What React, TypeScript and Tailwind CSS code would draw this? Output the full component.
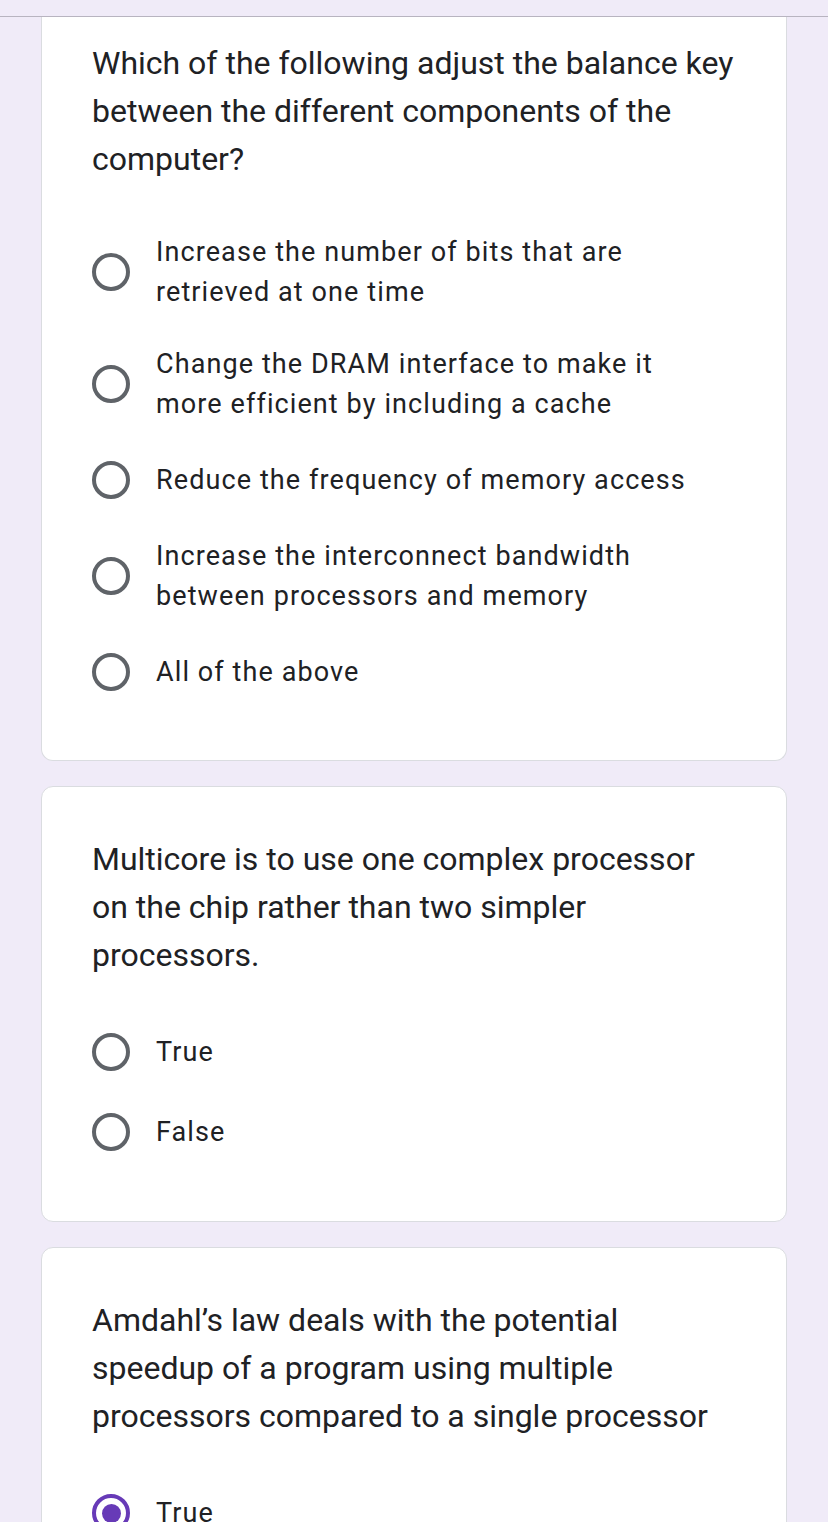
const font = { fontFamily: "Roboto, 'Noto Sans', sans-serif" };

type Question = {
  title: string;
  options: string[];
  selected?: number;
};

const questions: Question[] = [
  {
    title: "Which of the following adjust the balance key between the different components of the computer?",
    options: [
      "Increase the number of bits that are retrieved at one time",
      "Change the DRAM interface to make it more efficient by including a cache",
      "Reduce the frequency of memory access",
      "Increase the interconnect bandwidth between processors and memory",
      "All of the above",
    ],
  },
  {
    title: "Multicore is to use one complex processor on the chip rather than two simpler processors.",
    options: ["True", "False"],
  },
  {
    title: "Amdahl\u2019s law deals with the potential speedup of a program using multiple processors compared to a single processor",
    options: ["True", "False"],
    selected: 0,
  },
];

function Radio({ checked }: { checked: boolean }) {
  return (
    <div className="flex h-12 w-[38px] shrink-0 items-center justify-center">
      {checked ? (
        <div className="flex h-[38px] w-[38px] items-center justify-center rounded-full border-[4px] border-[#673ab7]">
          <div className="h-[19px] w-[19px] rounded-full bg-[#673ab7]" />
        </div>
      ) : (
        <div className="h-[38px] w-[38px] rounded-full border-[4px] border-[#5f6368]" />
      )}
    </div>
  );
}

function QuestionCard({ q, first }: { q: Question; first?: boolean }) {
  return (
    <div
      className={`mx-[41px] border border-[#dadce0] bg-white pl-[50px] pr-[50px] ${
        first ? "border-t-0 rounded-b-[12px] pt-[22px] pb-[48px]" : "rounded-[12px] pt-[48px] pb-[49px]"
      }`}
    >
      <div className="text-[32px] leading-[48px] text-[#202124]">{q.title}</div>
      <div className="mt-[33px] flex flex-col">
        {q.options.map((opt, i) => (
          <div key={opt} className="flex items-center gap-[26px] py-4">
            <Radio checked={q.selected === i} />
            <div className="pr-[31px] text-[27px] leading-[40px] tracking-[1.1px] text-[#202124]">
              {opt}
            </div>
          </div>
        ))}
      </div>
    </div>
  );
}

export default function App() {
  return (
    <div className="min-h-screen bg-[#f0ebf8] pt-4" style={font}>
      <div className="border-t border-[#b8b4c0]">
        {questions.map((q, i) => (
          <div key={i} className={i === 0 ? "" : "mt-[25px]"}>
            <QuestionCard q={q} first={i === 0} />
          </div>
        ))}
      </div>
    </div>
  );
}
